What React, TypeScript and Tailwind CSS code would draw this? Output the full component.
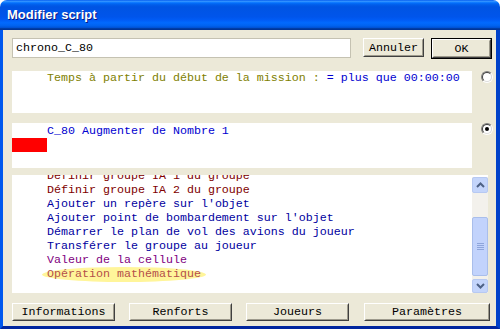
import { ReactNode } from 'react'

const mono = "font-['Liberation_Mono','Courier_New',monospace] text-[11.67px] leading-[14px]"

function ClassicButton({ children, w, def }: { children: ReactNode; w: string; def?: boolean }) {
  return (
    <div className={`${w} ${def ? 'border border-black' : ''} shrink-0`}>
      <div className="h-full border border-t-white border-l-white border-b-[#404040] border-r-[#404040] bg-[#ECE9D8]">
        <div className={`h-full flex items-center justify-center border border-t-[#ECE9D8] border-l-[#ECE9D8] border-b-[#9d9a8c] border-r-[#9d9a8c] text-black ${mono}`}>
          {children}
        </div>
      </div>
    </div>
  )
}

function Radio({ checked }: { checked?: boolean }) {
  return (
    <div className="w-[12px] h-[12px] rounded-full border border-t-[#808080] border-l-[#808080] border-b-white border-r-white shrink-0">
      <div className="w-full h-full rounded-full border border-t-[#404040] border-l-[#404040] border-b-[#dcdcdc] border-r-[#dcdcdc] bg-white flex items-center justify-center">
        {checked && <div className="w-[4px] h-[4px] rounded-full bg-black" />}
      </div>
    </div>
  )
}

const lines: { text: string; color: string; hl?: boolean }[] = [
  { text: 'Définir groupe IA 1 du groupe', color: 'text-[#800000]' },
  { text: 'Définir groupe IA 2 du groupe', color: 'text-[#800000]' },
  { text: "Ajouter un repère sur l'objet", color: 'text-[#0000A0]' },
  { text: "Ajouter point de bombardement sur l'objet", color: 'text-[#0000A0]' },
  { text: 'Démarrer le plan de vol des avions du joueur', color: 'text-[#0000A0]' },
  { text: 'Transférer le groupe au joueur', color: 'text-[#0000A0]' },
  { text: 'Valeur de la cellule', color: 'text-[#800080]' },
  { text: 'Opération mathématique', color: 'text-[#B4504A]', hl: true },
]

function ScrollBar() {
  return (
    <div className="w-[16px] mt-[2px] flex flex-col bg-[#F3F1EC] shrink-0">
      <div className="h-[16px] rounded-[2px] border border-[#B7C9F2] bg-[#C4D5FB] flex items-center justify-center">
        <svg width="9" height="6" viewBox="0 0 9 6"><path d="M1 5 L4.5 1.5 L8 5" stroke="#4D6185" strokeWidth="2" fill="none" /></svg>
      </div>
      <div className="h-[24px]" />
      <div className="h-[59px] rounded-[2px] border border-[#A9BEEB] bg-[#C2D3FC] flex items-center justify-center">
        <div className="flex flex-col gap-[1px]">
          <div className="w-[7px] h-[1px] bg-[#8EA5DB]" />
          <div className="w-[7px] h-[1px] bg-[#8EA5DB]" />
          <div className="w-[7px] h-[1px] bg-[#8EA5DB]" />
          <div className="w-[7px] h-[1px] bg-[#8EA5DB]" />
        </div>
      </div>
      <div className="flex-1" />
      <div className="h-[14px] rounded-[2px] border border-[#B7C9F2] bg-[#C4D5FB] flex items-center justify-center">
        <svg width="9" height="6" viewBox="0 0 9 6"><path d="M1 1 L4.5 4.5 L8 1" stroke="#4D6185" strokeWidth="2" fill="none" /></svg>
      </div>
    </div>
  )
}

export default function App() {
  return (
    <div className="w-[500px] h-[329px] flex flex-col bg-white">
      <div className="h-[30px] shrink-0 rounded-t-[7px] bg-[linear-gradient(180deg,#0058EE_0%,#3593FF_4%,#288EFF_6%,#127DFF_8%,#036FFC_10%,#0262EE_14%,#0057E5_20%,#0054E3_24%,#0055EB_56%,#005BF5_66%,#026AFE_76%,#0062EF_86%,#0052D6_92%,#0040AB_94%,#003092_100%)] flex items-center pl-[7px]">
        <span className="font-['Liberation_Sans',Arial,sans-serif] font-bold text-[13px] text-white [text-shadow:1px_1px_0_#0A1883]">
          Modifier script
        </span>
      </div>
      <div className="flex-1 flex flex-col bg-[#ECE9D8] border-l-[3px] border-l-[#0058EE] border-r-[4px] border-r-[#0041C9] border-b-[3px] border-b-[#00259E] pl-[9px] pt-[8px]">
        <div className="flex items-start h-[21px]">
          <div className={`w-[339px] h-[20px] bg-white border border-[#C5C2B2] flex items-center pl-[3px] text-black ${mono}`}>
            chrono_C_80
          </div>
          <div className="ml-[12px] h-[19px] flex">
            <ClassicButton w="w-[61px]">Annuler</ClassicButton>
          </div>
          <div className="ml-[7px] h-[21px] flex">
            <ClassicButton w="w-[61px]" def>OK</ClassicButton>
          </div>
        </div>

        <div className="mt-[12px] flex items-start">
          <div className={`w-[460px] h-[42px] bg-white pl-[35px] ${mono} whitespace-pre`}>
            <span className="text-[#808000]">Temps à partir du début de la mission : </span>
            <span className="text-[#0000D0]">= plus que 00:00:00</span>
          </div>
          <div className="ml-[9px]"><Radio /></div>
        </div>

        <div className="mt-[10px] flex items-start">
          <div className={`w-[460px] h-[45px] bg-white pt-[1px] ${mono}`}>
            <div className="pl-[35px] text-[#0000D0] whitespace-pre">C_80 Augmenter de Nombre 1</div>
            <div className="w-[35px] h-[14px] bg-[#FF0000]" />
          </div>
          <div className="ml-[9px]"><Radio checked /></div>
        </div>

        <div className="mt-[7px] w-[476px] h-[118px] flex bg-white">
          <div className="flex-1 overflow-hidden">
            <div className={`-mt-[6px] pl-[35px] ${mono}`}>
              {lines.map((l) => (
                <div key={l.text} className="relative whitespace-pre">
                  {l.hl && (
                    <div className="absolute -left-[5px] top-[0px] w-[164px] h-[15px] rounded-[50%] bg-[#FFF59A]" />
                  )}
                  <span className={`relative ${l.color}`}>{l.text}</span>
                </div>
              ))}
            </div>
          </div>
          <ScrollBar />
        </div>

        <div className="mt-[10px] flex h-[18px]">
          <ClassicButton w="w-[103px]">Informations</ClassicButton>
          <div className="ml-[14px] flex"><ClassicButton w="w-[103px]">Renforts</ClassicButton></div>
          <div className="ml-[14px] flex"><ClassicButton w="w-[103px]">Joueurs</ClassicButton></div>
          <div className="ml-[15px] flex"><ClassicButton w="w-[126px]">Paramètres</ClassicButton></div>
        </div>
      </div>
    </div>
  )
}
